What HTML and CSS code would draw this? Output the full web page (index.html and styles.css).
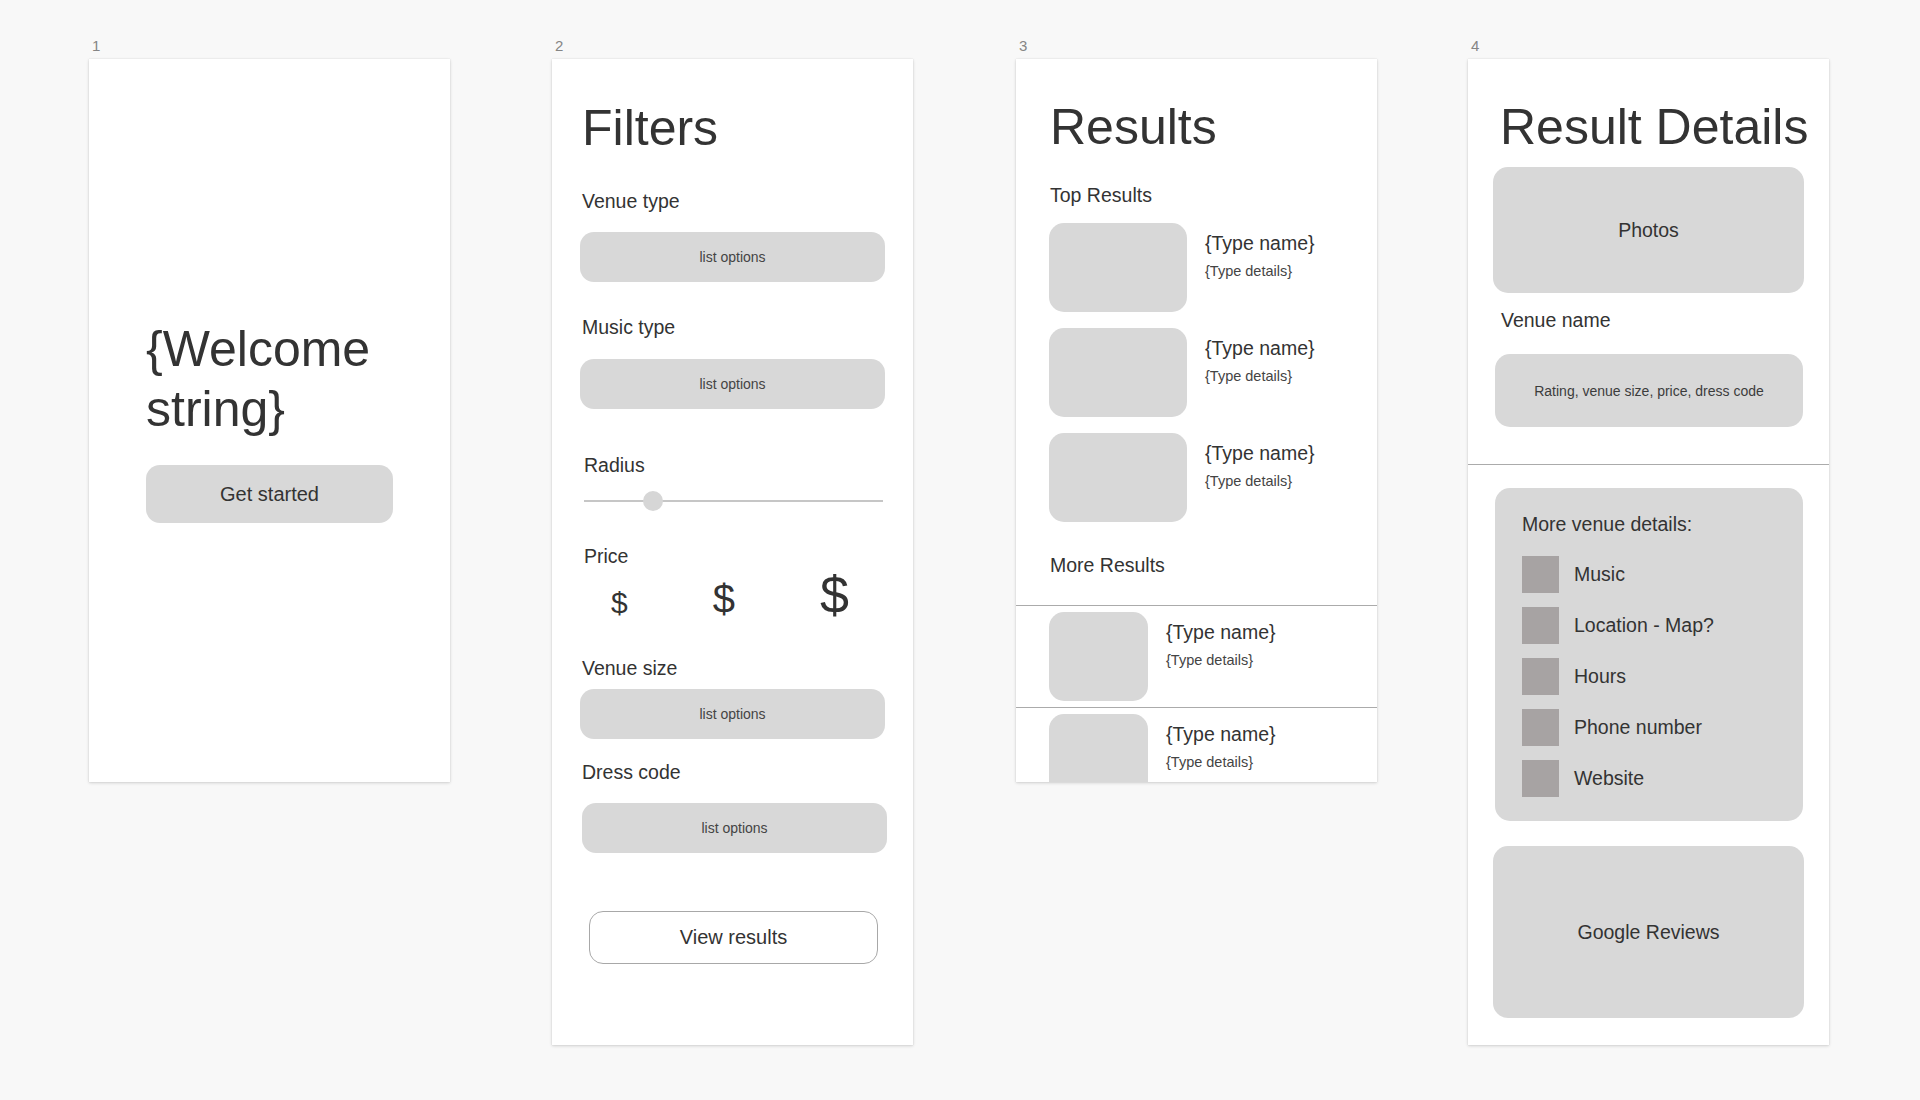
FILE: index.html
```html
<!DOCTYPE html>
<html lang="en">
<head>
<meta charset="utf-8">
<title>Wireframes</title>
<link rel="stylesheet" href="styles.css">
</head>
<body>
<main class="canvas">

  <section class="board">
    <div class="board-label">1</div>
    <div class="card card--short welcome">
      <h1 class="welcome-title">{Welcome<br>string}</h1>
      <div class="btn-fill">Get started</div>
    </div>
  </section>

  <section class="board board--2">
    <div class="board-label">2</div>
    <div class="card card--tall filters">
      <h1 class="heading">Filters</h1>
      <div class="label filters-venue">Venue type</div>
      <div class="list-box">list options</div>
      <div class="label filters-music">Music type</div>
      <div class="list-box list-box--music">list options</div>
      <div class="label label--indent filters-radius">Radius</div>
      <div class="slider"><span class="slider-knob"></span></div>
      <div class="label label--indent filters-price">Price</div>
      <div class="price-row">
        <span class="dollar dollar--s">$</span>
        <span class="dollar dollar--m">$</span>
        <span class="dollar dollar--l">$</span>
      </div>
      <div class="label filters-size">Venue size</div>
      <div class="list-box list-box--size">list options</div>
      <div class="label filters-dress">Dress code</div>
      <div class="list-box list-box--dress">list options</div>
      <div class="btn-outline">View results</div>
    </div>
  </section>

  <section class="board board--3">
    <div class="board-label">3</div>
    <div class="card card--short results">
      <div class="results-top">
        <h1 class="heading heading--results">Results</h1>
        <div class="label results-label">Top Results</div>
        <div class="top-list">
          <div class="result">
            <div class="thumb"></div>
            <div class="result-text">
              <div class="result-name">{Type name}</div>
              <div class="result-details">{Type details}</div>
            </div>
          </div>
          <div class="result">
            <div class="thumb"></div>
            <div class="result-text">
              <div class="result-name">{Type name}</div>
              <div class="result-details">{Type details}</div>
            </div>
          </div>
          <div class="result">
            <div class="thumb"></div>
            <div class="result-text">
              <div class="result-name">{Type name}</div>
              <div class="result-details">{Type details}</div>
            </div>
          </div>
        </div>
        <div class="label results-more">More Results</div>
      </div>
      <div class="more-list">
        <div class="more-row">
          <div class="thumb thumb--small"></div>
          <div class="result-text result-text--more">
            <div class="result-name">{Type name}</div>
            <div class="result-details">{Type details}</div>
          </div>
        </div>
        <div class="more-row">
          <div class="thumb thumb--small"></div>
          <div class="result-text result-text--more">
            <div class="result-name">{Type name}</div>
            <div class="result-details">{Type details}</div>
          </div>
        </div>
      </div>
    </div>
  </section>

  <section class="board board--4">
    <div class="board-label">4</div>
    <div class="card card--tall details">
      <div class="details-top">
        <h1 class="heading heading--details">Result Details</h1>
        <div class="panel panel--photos">Photos</div>
        <div class="label details-venue">Venue name</div>
        <div class="panel panel--rating">Rating, venue size, price, dress code</div>
      </div>
      <div class="details-bottom">
        <div class="panel panel--more">
          <div class="label more-title">More venue details:</div>
          <ul class="more-items">
            <li class="more-item"><span class="swatch"></span>Music</li>
            <li class="more-item"><span class="swatch"></span>Location - Map?</li>
            <li class="more-item"><span class="swatch"></span>Hours</li>
            <li class="more-item"><span class="swatch"></span>Phone number</li>
            <li class="more-item"><span class="swatch"></span>Website</li>
          </ul>
        </div>
        <div class="panel panel--reviews">Google Reviews</div>
      </div>
    </div>
  </section>

</main>
</body>
</html>
```

FILE: styles.css
```css
* {
  box-sizing: border-box;
}

html, body {
  margin: 0;
  padding: 0;
}

body {
  background: #f8f8f8;
  font-family: "Liberation Sans", Arial, Helvetica, sans-serif;
  color: #333333;
  width: 1920px;
  height: 1100px;
  overflow: hidden;
}

.canvas {
  display: flex;
  align-items: flex-start;
  padding: 38px 0 0 89px;
}

.board {
  display: flex;
  flex-direction: column;
  width: 361px;
  flex: 0 0 361px;
}

.board--2 { margin-left: 102px; }
.board--3 { margin-left: 103px; }
.board--4 { margin-left: 91px; }

.board-label {
  font-size: 15px;
  line-height: 16px;
  height: 16px;
  color: #858585;
  padding-left: 3px;
  margin-bottom: 5px;
}

.card {
  background: #ffffff;
  box-shadow: 0 1px 3px rgba(0, 0, 0, 0.16), 0 0 1px rgba(0, 0, 0, 0.12);
  display: flex;
  flex-direction: column;
  overflow: hidden;
}

.card--short { height: 723px; }
.card--tall { height: 986px; }

/* Shared text */
.heading {
  margin: 0;
  font-weight: normal;
  font-size: 50px;
  line-height: 56px;
  height: 56px;
  color: #333333;
  white-space: nowrap;
}

.label {
  font-size: 19.5px;
  line-height: 24px;
  height: 24px;
  color: #333333;
  white-space: nowrap;
}

/* Frame 1 */
.welcome {
  padding: 260px 0 0 57px;
}

.welcome-title {
  margin: 0;
  font-weight: normal;
  font-size: 50px;
  line-height: 60px;
  color: #333333;
}

.btn-fill {
  margin-top: 26px;
  width: 247px;
  height: 58px;
  border-radius: 14px;
  background: #d8d8d8;
  display: flex;
  align-items: center;
  justify-content: center;
  font-size: 20px;
  color: #333333;
}

/* Frame 2 */
.filters {
  padding: 41px 0 0 28px;
}

.filters .heading { margin-left: 2px; }
.filters .label { margin-left: 2px; }
.filters .label--indent { margin-left: 4px; }

.filters-venue { margin-top: 33px; }
.filters-music { margin-top: 33px; }
.filters-radius { margin-top: 44px; }
.filters-price { margin-top: 33px; }
.filters-size { margin-top: 35px; }
.filters-dress { margin-top: 21px; }

.list-box {
  margin-top: 19px;
  width: 305px;
  height: 50px;
  border-radius: 14px;
  background: #d8d8d8;
  display: flex;
  align-items: center;
  justify-content: center;
  font-size: 14px;
  color: #444444;
}

.list-box--music { margin-top: 20px; }
.list-box--size { margin-top: 9px; }
.list-box--dress { margin-top: 19px; margin-left: 2px; }

.slider {
  position: relative;
  margin: 14px 0 0 4px;
  width: 299px;
  height: 20px;
  display: flex;
  align-items: center;
}

.slider::before {
  content: "";
  display: block;
  width: 100%;
  height: 2px;
  background: #c6c6c6;
}

.slider-knob {
  position: absolute;
  left: 59px;
  top: 0;
  width: 20px;
  height: 20px;
  border-radius: 50%;
  background: #d6d6d6;
}

.price-row {
  display: flex;
  align-items: baseline;
  gap: 85px;
  margin: 1px 0 0 31px;
  height: 52px;
  line-height: 1;
  color: #333333;
}

.dollar--s { font-size: 30px; }
.dollar--m { font-size: 40px; }
.dollar--l { font-size: 52px; }

.btn-outline {
  margin: 58px 0 0 9px;
  width: 289px;
  height: 53px;
  border: 1px solid #a8a8a8;
  border-radius: 14px;
  background: #ffffff;
  display: flex;
  align-items: center;
  justify-content: center;
  font-size: 20px;
  color: #333333;
}

/* Frame 3 */
.results-top {
  padding: 40px 0 0 33px;
  border-bottom: 1px solid #ababab;
  padding-bottom: 28px;
}

.heading--results { margin-left: 1px; }

.results-label {
  margin-top: 28px;
  margin-left: 1px;
}

.top-list {
  display: flex;
  flex-direction: column;
  gap: 16px;
  margin-top: 16px;
}

.result {
  display: flex;
  align-items: flex-start;
}

.thumb {
  flex: 0 0 138px;
  width: 138px;
  height: 89px;
  border-radius: 15px;
  background: #d8d8d8;
}

.thumb--small {
  flex: 0 0 99px;
  width: 99px;
}

.result-text {
  margin-left: 18px;
  padding-top: 8px;
  display: flex;
  flex-direction: column;
}

.result-text--more {
  margin-left: 18px;
}

.result-name {
  font-size: 19.5px;
  line-height: 24px;
  height: 24px;
  color: #333333;
  white-space: nowrap;
}

.result-details {
  margin-top: 7px;
  font-size: 14.5px;
  line-height: 18px;
  color: #444444;
  white-space: nowrap;
}

.results-more {
  margin-top: 31px;
  margin-left: 1px;
}

.more-list {
  display: flex;
  flex-direction: column;
}

.more-row {
  display: flex;
  align-items: flex-start;
  padding: 6px 0 6px 33px;
  border-bottom: 1px solid #ababab;
}

/* Frame 4 */
.details-top {
  padding: 40px 0 37px 25px;
  border-bottom: 1px solid #ababab;
  display: flex;
  flex-direction: column;
}

.heading--details { margin-left: 7px; }

.panel {
  background: #d8d8d8;
  border-radius: 15px;
  display: flex;
  align-items: center;
  justify-content: center;
  color: #333333;
}

.panel--photos {
  margin-top: 12px;
  width: 311px;
  height: 126px;
  font-size: 19.5px;
}

.details-venue {
  margin-top: 15px;
  margin-left: 8px;
}

.panel--rating {
  margin: 22px 0 0 2px;
  width: 308px;
  height: 73px;
  font-size: 14px;
  color: #3c3c3c;
}

.details-bottom {
  padding: 23px 0 0 25px;
  display: flex;
  flex-direction: column;
}

.panel--more {
  margin-left: 2px;
  width: 308px;
  height: 333px;
  flex-direction: column;
  align-items: flex-start;
  justify-content: flex-start;
  padding: 24px 0 0 27px;
}

.more-title {
  color: #333333;
}

.more-items {
  list-style: none;
  margin: 20px 0 0 0;
  padding: 0;
  display: flex;
  flex-direction: column;
  gap: 14px;
}

.more-item {
  display: flex;
  align-items: center;
  height: 37px;
  font-size: 19.5px;
  color: #333333;
}

.swatch {
  flex: 0 0 37px;
  width: 37px;
  height: 37px;
  background: #a7a3a3;
  margin-right: 15px;
}

.panel--reviews {
  margin-top: 25px;
  width: 311px;
  height: 172px;
  font-size: 19.5px;
}
```
